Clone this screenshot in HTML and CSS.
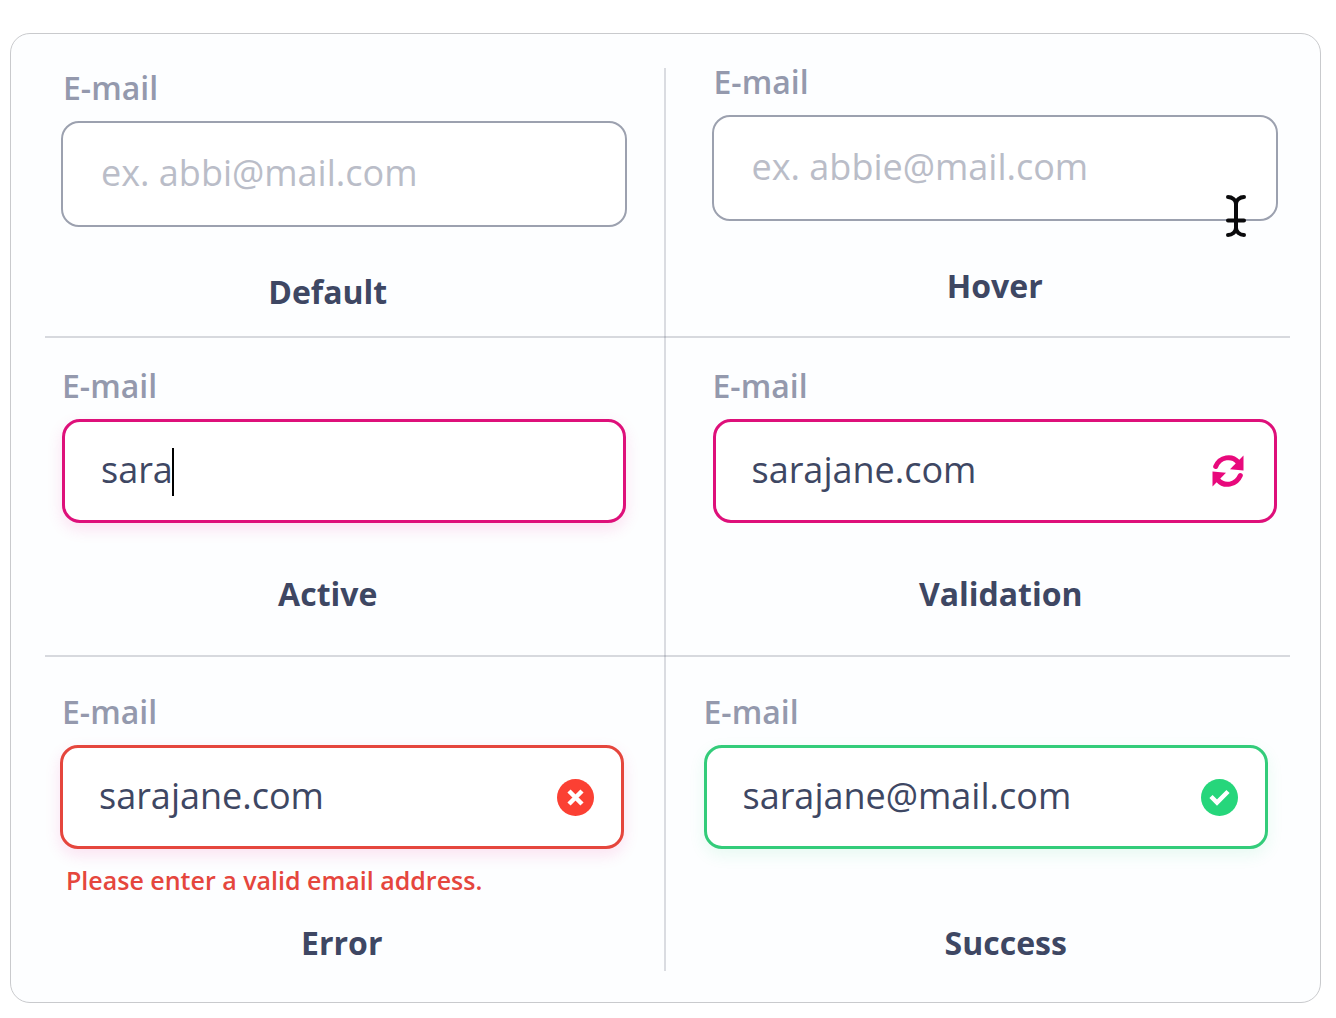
FILE: index.html
```html
<!DOCTYPE html>
<html lang="en">
<head>
<meta charset="utf-8">
<meta name="viewport" content="width=device-width, initial-scale=1">
<title>E-mail field states</title>
<link rel="stylesheet" href="styles.css">
</head>
<body>
<main class="card">
  <div class="row">
    <section class="cell cell-default">
      <label class="label" for="email-default">E-mail</label>
      <div class="field">
        <input class="input" id="email-default" type="text" placeholder="ex. abbi@mail.com">
      </div>
      <h2 class="caption">Default</h2>
    </section>
    <section class="cell cell-hover">
      <label class="label" for="email-hover">E-mail</label>
      <div class="field">
        <input class="input" id="email-hover" type="text" placeholder="ex. abbie@mail.com">
        <svg class="cursor" viewBox="0 0 24 44" aria-hidden="true">
          <path d="M4 3C8 3 12 6 12 10C12 6 16 3 20 3M12 10V34M4 41C8 41 12 38 12 34C12 38 16 41 20 41M4 26.500H20"/>
        </svg>
      </div>
      <h2 class="caption">Hover</h2>
    </section>
  </div>
  <hr class="divider">
  <div class="row">
    <section class="cell cell-active">
      <label class="label" for="email-active">E-mail</label>
      <div class="field field-active">
        <input class="input" id="email-active" type="text" value="sara">
        <span class="caret"></span>
      </div>
      <h2 class="caption">Active</h2>
    </section>
    <section class="cell cell-validation">
      <label class="label" for="email-validation">E-mail</label>
      <div class="field field-validation">
        <input class="input" id="email-validation" type="text" value="sarajane.com">
        <svg class="icon icon-sync" viewBox="0 0 32 32" aria-hidden="true">
          <g id="arrow"><path class="arc" d="M3.700 11.500C8 1.500 20 0 26 7"/><path class="head" d="M31.500 .6V15.600L18 14.200Z"/></g>
          <use href="#arrow" transform="rotate(180 16 16)"/>
        </svg>
      </div>
      <h2 class="caption">Validation</h2>
    </section>
  </div>
  <hr class="divider">
  <div class="row">
    <section class="cell cell-error">
      <label class="label" for="email-error">E-mail</label>
      <div class="field field-error">
        <input class="input" id="email-error" type="text" value="sarajane.com" aria-invalid="true" aria-describedby="email-message">
        <svg class="icon icon-badge" viewBox="0 0 37 37" aria-hidden="true">
          <circle cx="18.500" cy="18.500" r="18.500" fill="#fb4033"/>
          <path d="M12 12L25 25M25 12L12 25" fill="none" stroke="#fff" stroke-width="4.500"/>
        </svg>
      </div>
      <p class="message" id="email-message">Please enter a valid email address.</p>
      <h2 class="caption">Error</h2>
    </section>
    <section class="cell cell-success">
      <label class="label" for="email-success">E-mail</label>
      <div class="field field-success">
        <input class="input" id="email-success" type="text" value="sarajane@mail.com">
        <svg class="icon icon-badge" viewBox="0 0 37 37" aria-hidden="true">
          <circle cx="18.500" cy="18.500" r="18.500" fill="#26d67b"/>
          <path d="M10 17.500L16 23.500L27 12.500" fill="none" stroke="#fff" stroke-width="4.500"/>
        </svg>
      </div>
      <h2 class="caption">Success</h2>
    </section>
  </div>
</main>
</body>
</html>
```
FILE: styles.css
```css
* {
  box-sizing: border-box;
}

body {
  margin: 0;
  padding: 33px 15px 14px 10px;
  background: #fff;
  color: #3e4763;
  font-family: "Open Sans", "Noto Sans", sans-serif;
}

.card {
  position: relative;
  border: 1px solid #c9cacd;
  border-radius: 20px;
  background: #fdfeff;
}

/* Vertical rule between the two columns, crossing the row dividers */
.card::after {
  content: "";
  position: absolute;
  top: 34px;
  bottom: 31px;
  left: calc(50% - 2px);
  width: 2px;
  background: rgba(60, 64, 90, 0.18);
}

.row {
  display: grid;
  grid-template-columns: 1fr 1fr;
}

.divider {
  height: 2px;
  margin: 0 30px 0 34px;
  border: 0;
  background: #d7d9de;
}

.cell {
  display: flex;
  flex-direction: column;
  min-width: 0;
}

.cell-default { padding: 32px 39px 22px 50px; }
.cell-hover { padding: 26px 42px 28px 46px; }
.cell-active { padding: 26px 40px 39px 51px; }
.cell-validation { padding: 26px 43px 39px 47px; }
.cell-error { padding: 33px 42px 37px 49px; }
.cell-success { padding: 33px 52px 37px 38px; }

.label {
  margin: 0 0 11px 2px;
  color: #9499ad;
  font-size: 32px;
  font-weight: 600;
  line-height: 44px;
}

.cell-active .label,
.cell-validation .label,
.cell-success .label {
  margin-left: 0;
}

.field {
  position: relative;
  display: flex;
  align-items: center;
  height: 106px;
  padding: 0 29px 0 38px;
  border: 2px solid #9ca1af;
  border-radius: 18px;
  background: #fff;
}

.field-active,
.field-validation,
.field-error,
.field-success {
  height: 104px;
  padding: 0 27px 0 36px;
  border-width: 3px;
}

.field-active {
  border-color: #de107a;
  box-shadow: 0 6px 16px rgba(240, 20, 140, 0.12);
}

.field-validation {
  border-color: #de107a;
}

.field-error {
  border-color: #e5463d;
  box-shadow: 0 6px 16px rgba(240, 20, 140, 0.12);
}

.field-success {
  border-color: #33cc7a;
  box-shadow: 0 6px 16px rgba(38, 214, 123, 0.1);
}

.input {
  flex: 1;
  min-width: 0;
  padding: 0 0 2px;
  border: 0;
  outline: 0;
  background: transparent;
  color: inherit;
  font: 400 36px/50px "Open Sans", "Noto Sans", sans-serif;
}

.input::placeholder {
  color: #babdc8;
  opacity: 1;
}

.caret {
  position: absolute;
  top: 26px;
  left: 107px;
  width: 2px;
  height: 48px;
  background: #000;
}

.cursor {
  position: absolute;
  right: 28px;
  bottom: -19px;
  width: 24px;
  height: 44px;
  fill: none;
  stroke: #0a0a0c;
  stroke-width: 4;
  stroke-linecap: round;
}

.icon {
  flex: none;
}

.icon-badge {
  width: 37px;
  height: 37px;
}

.icon-sync {
  width: 32px;
  height: 32px;
  margin-right: 3px;
}

.arc {
  fill: none;
  stroke: #e8097c;
  stroke-width: 5;
  stroke-linecap: round;
}

.head {
  fill: #e8097c;
}

.message {
  margin: 15px 0 25px 6px;
  color: #e5463d;
  font-size: 25px;
  font-weight: 600;
  line-height: 32px;
}

.caption {
  margin: auto 0 0;
  font-size: 32px;
  font-weight: 700;
  line-height: 44px;
  text-align: center;
}

.cell-default .caption,
.cell-hover .caption {
  margin-top: 43px;
}

.cell-active .caption,
.cell-validation .caption {
  margin-top: 49px;
}

.cell-default .caption,
.cell-active .caption {
  padding-right: 32px;
}

.cell-validation .caption {
  padding-left: 12px;
}

.cell-success .caption {
  padding-left: 40px;
}
```
